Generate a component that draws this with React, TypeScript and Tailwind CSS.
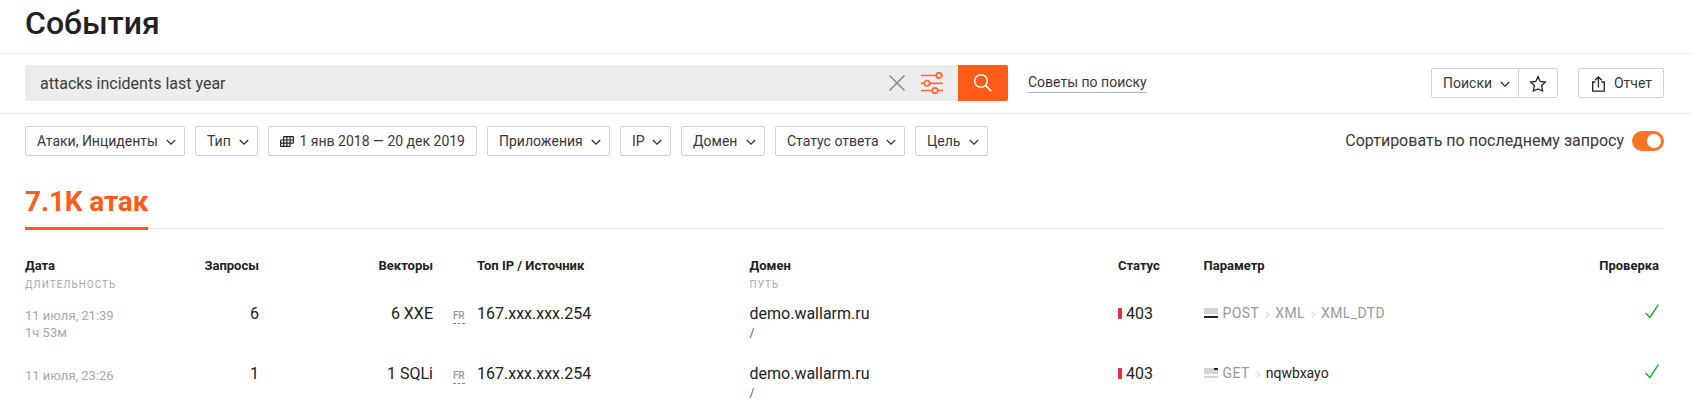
import React from "react";

const FILTERS = [
  { label: "Атаки, Инциденты", width: "w-[160px] pr-2" },
  { label: "Тип", width: "w-[63px] pr-2" },
  { label: "1 янв 2018 — 20 дек 2019", width: "w-[209px] pr-[11px]", calendar: true },
  { label: "Приложения", width: "w-[123px] pr-2" },
  { label: "IP", width: "w-[51px] pr-2" },
  { label: "Домен", width: "w-[84px] pr-2" },
  { label: "Статус ответа", width: "w-[130px] pr-2" },
  { label: "Цель", width: "w-[73px] pr-2" },
];

type Row = {
  date: string;
  duration?: string;
  requests: string;
  vectors: string;
  method: string;
  tags: string[];
  name?: string;
};

const ROWS: Row[] = [
  { date: "11 июля, 21:39", duration: "1ч 53м", requests: "6", vectors: "6 XXE", method: "POST", tags: ["XML", "XML_DTD"] },
  { date: "11 июля, 23:26", requests: "1", vectors: "1 SQLi", method: "GET", tags: [], name: "nqwbxayo" },
];

const COLUMNS = "grid grid-cols-[134px_100px_174px_20px_24px_272.5px_368.5px_85.5px_1fr_100px] pl-[25px] pr-[34px]";

function Chevron() {
  return (
    <svg width="10" height="7" viewBox="0 0 10 7" fill="none" stroke="#2b2b2b" strokeWidth="1.2" className="mt-[3px] shrink-0">
      <path d="M.8 1 5 5.2 9.2 1" />
    </svg>
  );
}

function CalendarIcon() {
  return (
    <svg width="14" height="11" viewBox="0 0 14 11" fill="none" stroke="#222" strokeWidth="1.2" className="shrink-0">
      <path d="M3.5 .6h9.9M.6 4h12.8M.6 7.2h12.8M.6 10.4h9.4M.6 4v6.4M3.7 .6v9.8M6.9 .6v9.8M10.1 .6v9.8M13.3 .6v6.6" />
    </svg>
  );
}

function Crumb() {
  return (
    <svg width="5" height="7" viewBox="0 0 5 7" fill="none" stroke="#dedede" strokeWidth="1.3" className="mt-[2px] shrink-0">
      <path d="M.8 .6 3.8 3.5 .8 6.4" />
    </svg>
  );
}

function RequestPart({ body }: { body: boolean }) {
  return (
    <svg width="14" height="10" viewBox="0 0 14 10" shapeRendering="crispEdges" className="shrink-0">
      <path fill="#d3d3d3" d="M0 0h14v6H0z" />
      {body ? <path fill="#222" d="M0 8h14v2H0z" /> : <path fill="#d3d3d3" d="M0 8h14v2H0z" />}
      {!body && <path fill="#222" d="M10 0h4v2h-4z" />}
    </svg>
  );
}

export default function App() {
  return (
    <div className="h-[410px] w-[1693px] overflow-hidden bg-white font-[Roboto,sans-serif] text-[#222]">
      <header className="h-[54px] border-b border-[#f2f2f2] pl-[25px]">
        <h1 className="pt-[3px] text-[32px] leading-[40px] font-medium">События</h1>
      </header>

      <div className="flex h-[60px] items-center border-b border-[#e9e9e9] pr-[29px] pb-px pl-[25px]">
        <div className="flex h-9 w-[933px] items-center rounded-l-[2px] bg-[#ececec] pr-[15px] pl-[15px]">
          <span className="flex-1 pt-[2px] text-[16px] text-[#3e3e3e]">attacks incidents last year</span>
          <svg width="16" height="16" viewBox="0 0 16 16" stroke="#8b8b8b" strokeWidth="1.5" className="mr-4">
            <path d="M.5 .5l15 15M15.5 .5l-15 15" />
          </svg>
          <svg width="22" height="22" viewBox="0 0 22 22" fill="none" stroke="#ff6a2d" strokeWidth="1.7">
            <path d="M0 3.5h15.2M20.8 3.5H22M0 11.3h3.2M8.8 11.3H22M0 18.5h11.2M16.8 18.5H22" />
            <circle cx="18" cy="3.5" r="2.7" />
            <circle cx="6" cy="11.2" r="2.7" />
            <circle cx="14" cy="18.5" r="2.7" />
          </svg>
        </div>
        <button className="flex h-9 w-[50px] items-center justify-center rounded-r-[2px] bg-[#ff5c1a]">
          <svg width="20" height="20" viewBox="0 0 20 20" fill="none" stroke="#fff" strokeWidth="1.5">
            <circle cx="8" cy="8" r="6.3" />
            <path d="M12.4 12.4l6 6" />
          </svg>
        </button>
        <a className="mt-[-1px] ml-5 border-b border-[#b5b5b5] text-[14px] leading-[19px] text-[#383838]">Советы по поиску</a>
        <div className="ml-auto flex h-[30px]">
          <button className="flex w-[88px] items-center justify-between rounded-l-[2px] border border-[#d2d2d2] pr-2 pl-[11px] text-[14px] text-[#383838]">
            Поиски
            <Chevron />
          </button>
          <button className="flex w-[39px] items-center justify-center rounded-r-[2px] border border-l-0 border-[#d2d2d2]">
            <svg width="18" height="18" viewBox="0 0 18 18" fill="none" stroke="#222" strokeWidth="1.3" className="mt-px">
              <path d="M9 1.6l2.2 4.8 5.2.6-3.8 3.6 1 5.4L9 14l-4.6 2 1-5.4L1.6 7l5.2-.6z" />
            </svg>
          </button>
          <button className="ml-5 flex w-[86px] items-center justify-between rounded-[2px] border border-[#d2d2d2] pr-[11px] pl-[13px] text-[14px] text-[#383838]">
            <svg width="13" height="16" viewBox="0 0 13 16" fill="none" stroke="#222" strokeWidth="1.3" className="mt-px">
              <path d="M3.4 6H.7v9.2h11.6V6H9.4M6.4 11.5V1M3 4.3 6.4 1l3.4 3.3" />
            </svg>
            Отчет
          </button>
        </div>
      </div>

      <div className="flex h-[42px] items-end gap-[10px] pr-[29px] pl-[25px]">
        {FILTERS.map((f) => (
          <button
            key={f.label}
            className={`flex h-[30px] shrink-0 items-center justify-between rounded-[2px] border border-[#d2d2d2] pl-[11px] text-[14px] whitespace-nowrap text-[#383838] ${f.width}`}
          >
            {f.calendar && <CalendarIcon />}
            {f.label}
            {!f.calendar && <Chevron />}
          </button>
        ))}
        <span className="mb-[3px] ml-auto text-[16px] leading-6 whitespace-nowrap text-[#383838]">Сортировать по последнему запросу</span>
        <span className="mb-[5px] ml-[-2px] flex h-5 w-8 items-center justify-end rounded-full bg-[#ff7420] pr-[3px]">
          <span className="size-[14px] rounded-full bg-white" />
        </span>
      </div>

      <div className="mr-[29px] ml-[25px] flex h-[74px]">
        <h2 className="flex h-[74px] w-[123px] items-end border-b-[3px] border-[#ff5c1a] pb-[9px] text-[28px] leading-8 font-bold tracking-[-0.15px] whitespace-nowrap text-[#ff5c1a]">7.1K атак</h2>
        <div className="mb-[1px] flex-1 border-b border-[#ecebe3]" />
      </div>

      <div className={`${COLUMNS} h-[70px] pt-7 text-[13px] leading-4 font-bold`}>
        <div>
          Дата
          <div className="mt-[3px] text-[10px] leading-4 font-normal tracking-[1px] text-[#a8a8a8]">ДЛИТЕЛЬНОСТЬ</div>
        </div>
        <div className="text-right">Запросы</div>
        <div className="text-right">Векторы</div>
        <div className="col-start-6">Топ IP / Источник</div>
        <div>
          Домен
          <div className="mt-[3px] text-[10px] leading-4 font-normal tracking-[1px] text-[#a8a8a8]">ПУТЬ</div>
        </div>
        <div>Статус</div>
        <div>Параметр</div>
        <div className="text-right">Проверка</div>
      </div>

      {ROWS.map((r) => (
        <div key={r.date} className={`${COLUMNS} h-[60px] pt-[4px] text-[16px] leading-5`}>
          <div className="pt-[3px] text-[13px] leading-[17px] text-[#a8a8a8]">
            <div>{r.date}</div>
            <div>{r.duration}</div>
          </div>
          <div className="text-right">{r.requests}</div>
          <div className="text-right">{r.vectors}</div>
          <div />
          <div className="pt-[5px]">
            <div className="w-3 border-b border-dashed border-[#8c8c8c] text-[10px] leading-[14px] font-medium tracking-[-0.2px] text-[#999]">FR</div>
          </div>
          <div>167.xxx.xxx.254</div>
          <div>
            demo.wallarm.ru
            <div className="text-[12px] leading-[19px] text-[#555]">/</div>
          </div>
          <div className="flex h-5 items-center gap-[4px]">
            <span className="mb-px h-[11px] w-1 rounded-[1px] bg-[#ec2d36]" />
            403
          </div>
          <div className="-mt-px flex h-5 items-center text-[14px] tracking-[0.4px] text-[#999]">
            <RequestPart body={r.method === "POST"} />
            <span className="ml-[5px]">{r.method}</span>
            {r.tags.map((t) => (
              <React.Fragment key={t}>
                <span className="w-[6px]" />
                <Crumb />
                <span className="ml-[5px]">{t}</span>
              </React.Fragment>
            ))}
            {r.name && (
              <>
                <span className="w-[6px]" />
                <Crumb />
                <span className="ml-[5px] tracking-normal text-[#222]">{r.name}</span>
              </>
            )}
          </div>
          <div className="flex justify-end">
            <svg width="14" height="15" viewBox="0 0 14 15" fill="none" stroke="#1db23c" strokeWidth="1.5">
              <path d="M.5 9l4.4 4.5L13.4 .6" />
            </svg>
          </div>
        </div>
      ))}
    </div>
  );
}
